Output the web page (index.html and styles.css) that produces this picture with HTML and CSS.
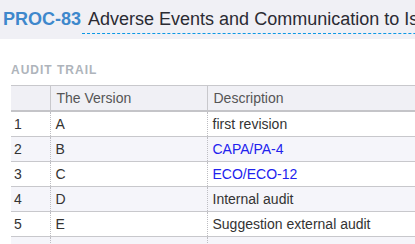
FILE: index.html
```html
<!DOCTYPE html>
<html>
<head>
<meta charset="utf-8">
<link rel="stylesheet" href="styles.css">
</head>
<body>
<div class="page">
  <div class="topbar">
    <span class="key">PROC-83</span>
    <span class="title">Adverse Events and Communication to Issue Management</span>
  </div>
  <div class="section">
    <div class="label">AUDIT TRAIL</div>
    <table class="grid">
      <colgroup><col class="c-num"><col class="c-ver"><col class="c-desc"></colgroup>
      <thead>
        <tr><th></th><th>The Version</th><th>Description</th></tr>
      </thead>
      <tbody>
        <tr><td>1</td><td>A</td><td>first revision</td></tr>
        <tr><td>2</td><td>B</td><td><a class="link">CAPA/PA-4</a></td></tr>
        <tr><td>3</td><td>C</td><td><a class="link">ECO/ECO-12</a></td></tr>
        <tr><td>4</td><td>D</td><td>Internal audit</td></tr>
        <tr><td>5</td><td>E</td><td>Suggestion external audit</td></tr>
        <tr><td></td><td></td><td></td></tr>
      </tbody>
    </table>
  </div>
</div>
</body>
</html>
```
FILE: styles.css
```css
html, body {
  margin: 0;
  padding: 0;
  background: #ffffff;
  overflow: hidden;
}
.page {
  width: 415px;
  height: 244px;
  overflow: hidden;
  font-family: "Liberation Sans", Arial, sans-serif;
}
.topbar {
  height: 39px;
  background: #f0f0f5;
  display: flex;
  align-items: flex-start;
  padding-left: 3px;
  white-space: nowrap;
  box-sizing: border-box;
  padding-top: 9px;
}
.key {
  font-size: 18px;
  font-weight: bold;
  color: #3e88cc;
  line-height: 21px;
}
.title {
  font-size: 18px;
  color: #2b2b33;
  line-height: 21px;
  margin-left: 1px;
  padding: 0 0 3px 6px;
  border-bottom: 1px dashed #0a98e6;
}
.section {
  padding: 24px 0 0 11px;
}
.label {
  font-size: 12px;
  font-weight: bold;
  letter-spacing: 1px;
  color: #aeb4bb;
  line-height: 14px;
  margin-bottom: 8px;
}
.grid {
  border-collapse: collapse;
  table-layout: fixed;
  width: 620px;
  font-size: 14px;
  color: #333333;
}
.c-num { width: 39px; }
.c-ver { width: 157px; }
.c-desc { width: 424px; }
.grid th {
  background: #f0f0f5;
  color: #555555;
  font-weight: normal;
  text-align: left;
  height: 24px;
  padding: 0 6px;
  border-top: 1px solid #c8c8cc;
  border-bottom: 2px solid #c4c4c8;
  border-left: 1px solid #c8c8cc;
}
.grid th:first-child { border-left: none; }
.grid td {
  height: 24px;
  padding: 0 6px 0 5px;
  border-bottom: 1px solid #c8c8cc;
  border-left: 1px dotted #bdbdc2;
}
.grid td:first-child { border-left: none; padding-left: 3px; }
.grid tbody tr:nth-child(even) td { background: #f5f5fa; }
.link {
  color: #2222ee;
  text-decoration: none;
}
```
